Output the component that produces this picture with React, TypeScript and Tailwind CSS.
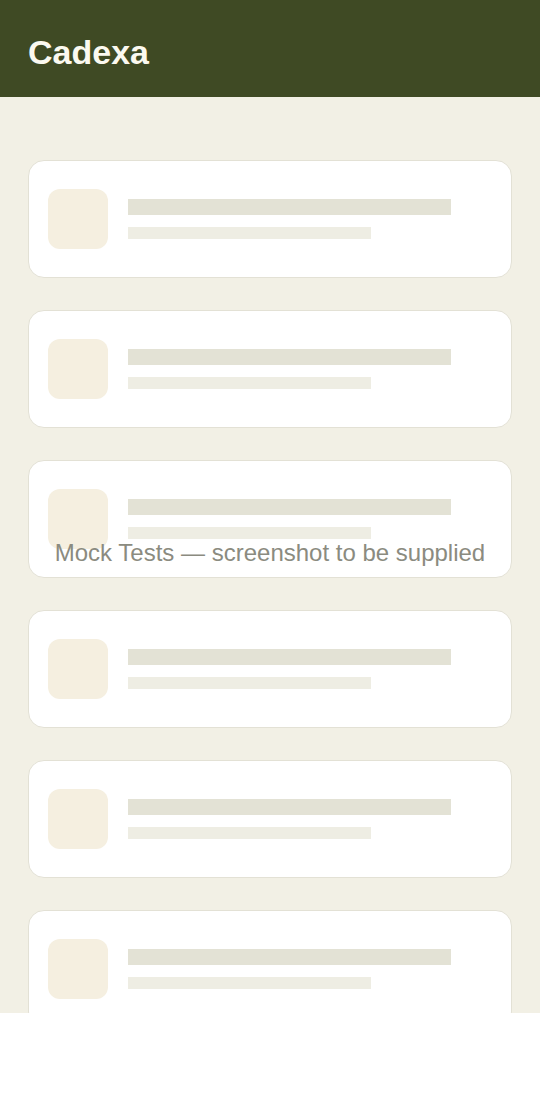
const CARDS = [0, 1, 2, 3, 4, 5];

function SkeletonCard() {
  return (
    <div className="flex items-center gap-5 rounded-2xl border border-[#e3e1d5] bg-white px-[19px] py-[28px] shrink-0">
      <div className="h-[60px] w-[60px] shrink-0 rounded-xl bg-[#f5efe0]" />
      <div className="flex flex-col gap-3">
        <div className="h-4 w-[323px] bg-[#e3e2d5]" />
        <div className="h-3 w-[243px] bg-[#eeede3]" />
      </div>
    </div>
  );
}

export default function App() {
  return (
    <div className="relative h-[1110px] w-[540px] bg-white font-['Liberation_Sans',Arial,sans-serif]">
      <div className="flex h-[1013px] flex-col overflow-hidden bg-[#f2f0e5]">
        <header className="flex h-[97px] shrink-0 items-center bg-[#3f4a24] px-7 pt-[6px]">
          <h1 className="text-[34px] font-bold leading-none text-[#fbf9f0]">Cadexa</h1>
        </header>
        <main className="flex flex-col gap-8 px-7 pt-[63px]">
          {CARDS.map((i) => (
            <SkeletonCard key={i} />
          ))}
        </main>
      </div>
      <div className="pointer-events-none absolute inset-0 flex items-center justify-center pb-1">
        <p className="text-[24px] text-[#8b8b80]">Mock Tests — screenshot to be supplied</p>
      </div>
    </div>
  );
}
